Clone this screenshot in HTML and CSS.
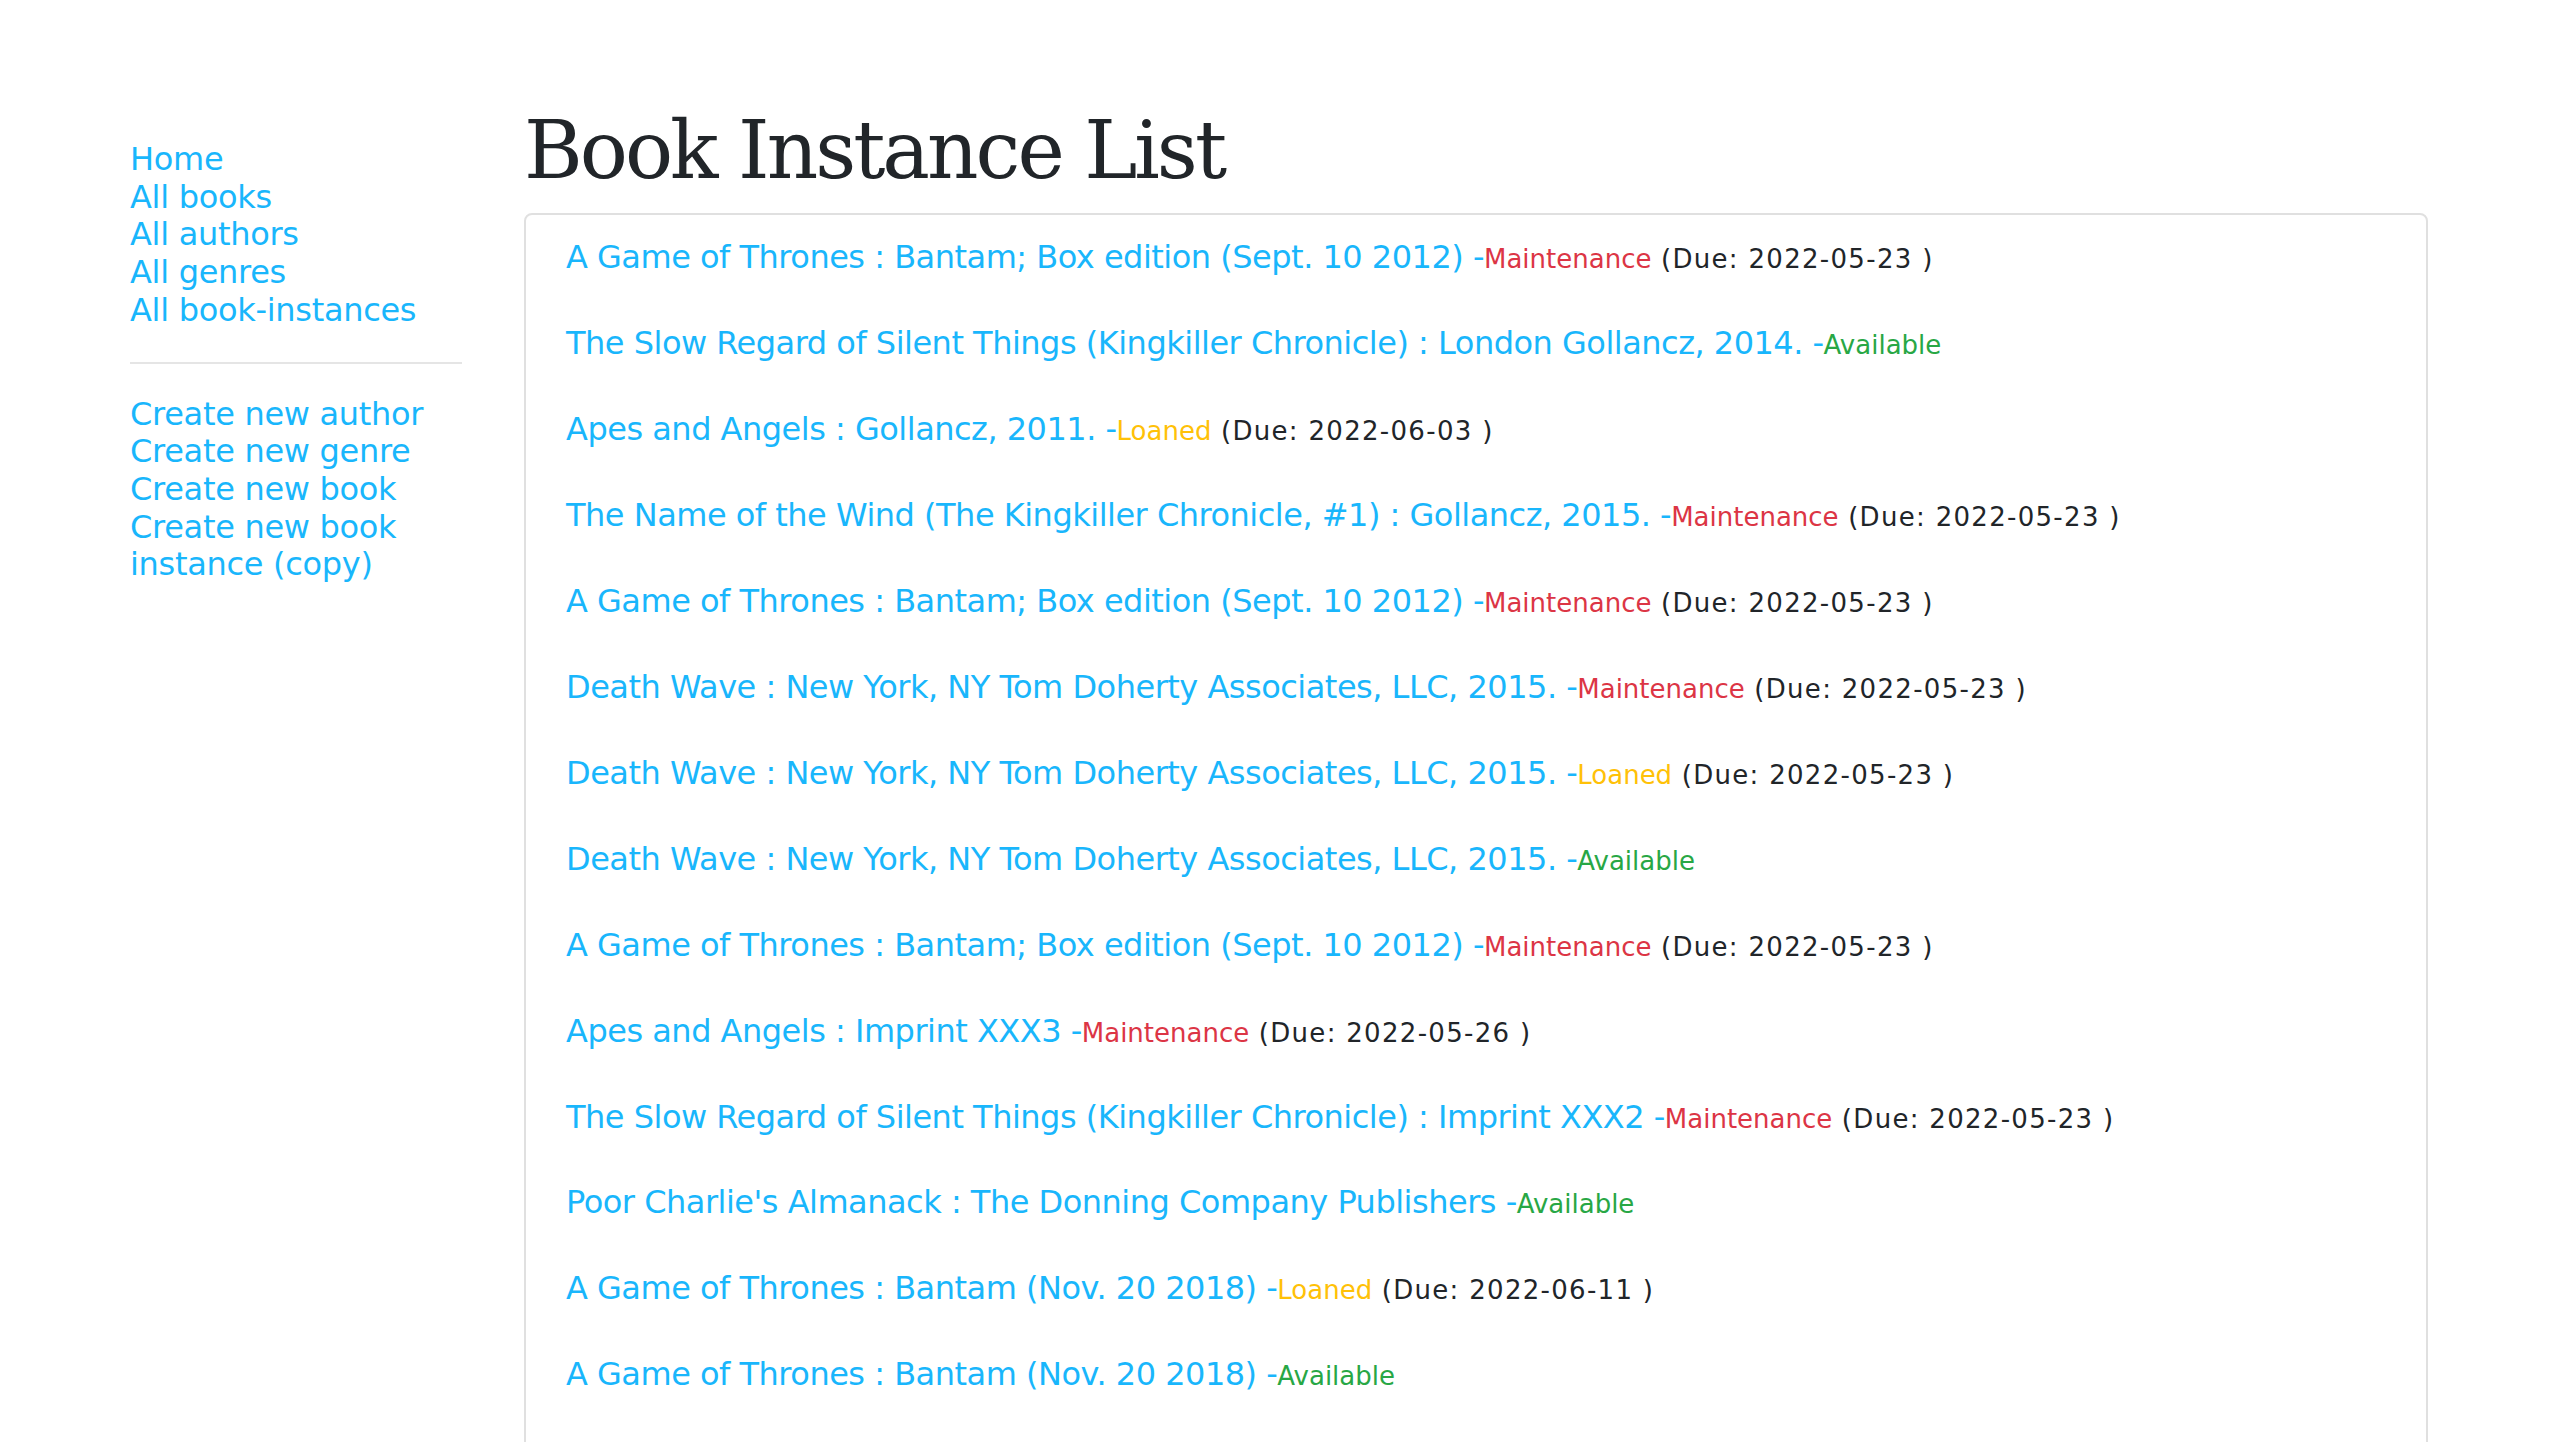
FILE: index.html
```html
<!DOCTYPE html>
<html lang="en">
<head>
<meta charset="utf-8">
<title>Local Library</title>
<link rel="stylesheet" href="styles.css">
</head>
<body>
<div class="page">
  <nav class="sidebar">
    <ul class="nav-list">
      <li><a href="#">Home</a></li>
      <li><a href="#">All books</a></li>
      <li><a href="#">All authors</a></li>
      <li><a href="#">All genres</a></li>
      <li><a href="#">All book-instances</a></li>
    </ul>
    <hr class="divider">
    <ul class="nav-list">
      <li><a href="#">Create new author</a></li>
      <li><a href="#">Create new genre</a></li>
      <li><a href="#">Create new book</a></li>
      <li><a href="#">Create new book instance (copy)</a></li>
    </ul>
  </nav>
  <main class="content">
    <h1 class="title">Book Instance List</h1>
    <ul class="card">
      <li class="item"><a href="#">A Game of Thrones : Bantam; Box edition (Sept. 10 2012) -</a><span class="st danger">Maintenance</span><span class="due"> (Due: 2022-05-23 )</span></li>
      <li class="item"><a href="#">The Slow Regard of Silent Things (Kingkiller Chronicle) : London Gollancz, 2014. -</a><span class="st success">Available</span></li>
      <li class="item"><a href="#">Apes and Angels : Gollancz, 2011. -</a><span class="st warning">Loaned</span><span class="due"> (Due: 2022-06-03 )</span></li>
      <li class="item"><a href="#">The Name of the Wind (The Kingkiller Chronicle, #1) : Gollancz, 2015. -</a><span class="st danger">Maintenance</span><span class="due"> (Due: 2022-05-23 )</span></li>
      <li class="item"><a href="#">A Game of Thrones : Bantam; Box edition (Sept. 10 2012) -</a><span class="st danger">Maintenance</span><span class="due"> (Due: 2022-05-23 )</span></li>
      <li class="item"><a href="#">Death Wave : New York, NY Tom Doherty Associates, LLC, 2015. -</a><span class="st danger">Maintenance</span><span class="due"> (Due: 2022-05-23 )</span></li>
      <li class="item"><a href="#">Death Wave : New York, NY Tom Doherty Associates, LLC, 2015. -</a><span class="st warning">Loaned</span><span class="due"> (Due: 2022-05-23 )</span></li>
      <li class="item"><a href="#">Death Wave : New York, NY Tom Doherty Associates, LLC, 2015. -</a><span class="st success">Available</span></li>
      <li class="item"><a href="#">A Game of Thrones : Bantam; Box edition (Sept. 10 2012) -</a><span class="st danger">Maintenance</span><span class="due"> (Due: 2022-05-23 )</span></li>
      <li class="item"><a href="#">Apes and Angels : Imprint XXX3 -</a><span class="st danger">Maintenance</span><span class="due"> (Due: 2022-05-26 )</span></li>
      <li class="item"><a href="#">The Slow Regard of Silent Things (Kingkiller Chronicle) : Imprint XXX2 -</a><span class="st danger">Maintenance</span><span class="due"> (Due: 2022-05-23 )</span></li>
      <li class="item"><a href="#">Poor Charlie's Almanack : The Donning Company Publishers -</a><span class="st success">Available</span></li>
      <li class="item"><a href="#">A Game of Thrones : Bantam (Nov. 20 2018) -</a><span class="st warning">Loaned</span><span class="due"> (Due: 2022-06-11 )</span></li>
      <li class="item"><a href="#">A Game of Thrones : Bantam (Nov. 20 2018) -</a><span class="st success">Available</span></li>
    </ul>
  </main>
</div>
</body>
</html>
```
FILE: styles.css
```css
html, body {
  margin: 0;
  padding: 0;
  background: #ffffff;
}
body {
  font-family: "DejaVu Sans", Verdana, sans-serif;
  font-size: 32px;
  line-height: 37.7px;
  color: #212529;
}
a {
  color: #19b6fc;
  text-decoration: none;
}
.page {
  display: flex;
  align-items: flex-start;
  gap: 62px;
  padding: 0 132px 0 130px;
}
.sidebar {
  width: 332px;
  flex: 0 0 332px;
  padding-top: 141px;
}
.nav-list {
  list-style: none;
  margin: 0;
  padding: 0;
}
.nav-list a {
  letter-spacing: -0.3px;
}
.divider {
  margin: 32px 0;
  border: 0;
  border-top: 2px solid #e5e5e5;
  height: 0;
}
.content {
  flex: 1;
  min-width: 0;
  padding-top: 103px;
}
.title {
  margin: 0 0 14px 0;
  font-family: "DejaVu Serif", "Liberation Serif", serif;
  font-weight: normal;
  font-size: 80px;
  line-height: 96px;
  letter-spacing: -3px;
  color: #212529;
}
.card {
  list-style: none;
  margin: 0;
  padding: 0 0 120px 0;
  border: 2px solid #e0e0e0;
  border-radius: 8px;
}
.item {
  padding: 24px 40px;
  line-height: 37.95px;
}
.item a {
  letter-spacing: -0.5px;
}
.st, .due {
  font-size: 26px;
  line-height: 20px;
}
.due {
  letter-spacing: 1.3px;
}
.danger { color: #dc3545; }
.success { color: #28a745; }
.warning { color: #ffc107; }
.due { color: #212529; }
```
